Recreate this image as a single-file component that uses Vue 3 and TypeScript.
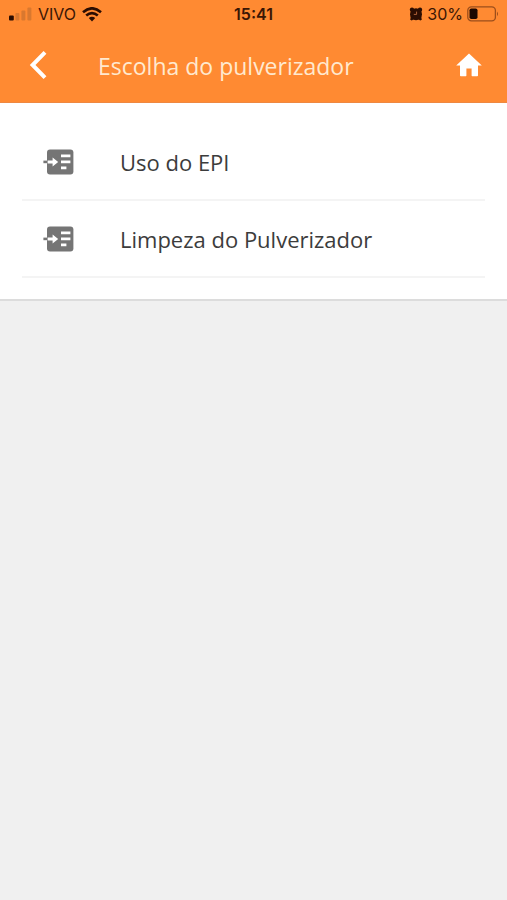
<script setup lang="ts">
interface MenuEntry {
  id: string
  label: string
}

const entries: MenuEntry[] = [
  { id: 'uso-epi', label: 'Uso do EPI' },
  { id: 'limpeza', label: 'Limpeza do Pulverizador' },
]

const carrier = 'VIVO'
const clock = '15:41'
const battery = 30
</script>

<template>
  <div class="screen">
    <header class="header">
      <div class="status">
        <div class="status-left">
          <svg class="signal" width="24" height="14" viewBox="0 0 24 14" aria-hidden="true">
            <rect x="1" y="8.6" width="4.8" height="5" rx="1" fill="#2b0d02" />
            <g fill="#d9782f">
              <rect x="7.4" y="6" width="4" height="7.6" rx="1" />
              <rect x="13.4" y="3.4" width="4" height="10.2" rx="1" />
              <rect x="19.4" y="0.4" width="4" height="13.2" rx="1" />
            </g>
          </svg>
          <span class="carrier">{{ carrier }}</span>
          <svg width="20" height="15" viewBox="0 0 20 15" aria-hidden="true">
            <g fill="none" stroke="#2b0d02" stroke-width="2.6">
              <path d="M1 5.2Q10 -2.6 19 5.2" />
              <path d="M4.2 8.6Q10 3.6 15.8 8.6" />
            </g>
            <path d="M6.8 11.1Q10 8.4 13.2 11.1L10 14.6Z" fill="#2b0d02" />
          </svg>
        </div>
        <time class="clock">{{ clock }}</time>
        <div class="status-right">
          <svg width="14" height="14" viewBox="0 0 14 14" aria-hidden="true">
            <g fill="#2b0d02">
              <circle cx="7" cy="7.2" r="6" />
              <circle cx="3" cy="2.8" r="2.2" />
              <circle cx="11" cy="2.8" r="2.2" />
              <path d="M2 9L1.2 12.8L2.8 13.6L5 12ZM12 9L12.8 12.8L11.2 13.6L9 12Z" />
            </g>
            <path d="M7.6 4.6V7.4H4.8" fill="none" stroke="#b0633a" stroke-width="1" />
          </svg>
          <span class="percent">{{ battery }}%</span>
          <svg width="32" height="16" viewBox="0 0 32 16" aria-hidden="true">
            <rect x="0.8" y="0.8" width="27.6" height="14" rx="3.6" fill="none" stroke="#9c4e1b" stroke-width="1.3" />
            <rect x="2.5" y="2.5" width="8" height="10.6" rx="1.8" fill="#1d0801" />
            <path d="M30 5.4Q32 7.8 30 10.2Z" fill="#9c4e1b" />
          </svg>
        </div>
      </div>
      <nav class="toolbar">
        <button class="icon-button" type="button" aria-label="Voltar">
          <svg width="18" height="30" viewBox="0 0 18 30" aria-hidden="true">
            <path d="M16 2.4L3.6 15L16 27.6" fill="none" stroke="#fff" stroke-width="4" />
          </svg>
        </button>
        <h1 class="title">Escolha do pulverizador</h1>
        <button class="icon-button" type="button" aria-label="Início">
          <svg width="26" height="24" viewBox="0 0 26 24" aria-hidden="true">
            <path d="M13 0.4L0.2 12.4H4V22.4Q4 23.2 4.8 23.2H9.8Q10.4 23.2 10.4 22.6V15.4H15.6V22.6Q15.6 23.2 16.2 23.2H21.2Q22 23.2 22 22.4V12.4H25.8Z" fill="#fff" />
          </svg>
        </button>
      </nav>
    </header>
    <main>
      <ul class="list">
        <li v-for="entry in entries" :key="entry.id" class="item">
          <a class="link" :href="'#' + entry.id">
            <svg class="glyph" width="31" height="26" viewBox="0 0 31 26" aria-hidden="true">
              <rect x="4" y="0.6" width="26.4" height="24.8" rx="3" fill="#757575" />
              <path d="M0.4 11.6H4V14.2H0.4Z" fill="#757575" />
              <path d="M4.6 11.4H9.6V8.4L15.2 12.9L9.6 17.4V14.4H4.6Z" fill="#fff" />
              <path d="M18 5.4H27.4V8.2H18ZM18 11.5H27.4V14.3H18ZM18 17.4H23.4V20.2H18Z" fill="#fff" />
            </svg>
            <span>{{ entry.label }}</span>
          </a>
        </li>
      </ul>
    </main>
  </div>
</template>

<style>
body {
  background: #f0f0f0;
}
</style>

<style scoped>
.screen {
  min-height: 100vh;
  background: #f0f0f0;
  font-family: "Open Sans", "Noto Sans", sans-serif;
}

.header {
  background: #ff8a32;
  border-bottom: 1px solid #ee8841;
}

.status {
  display: grid;
  grid-template-columns: 1fr auto 1fr;
  align-items: center;
  height: 28px;
  padding: 0 8px;
  color: #3a1605;
  font-family: Inter, "Liberation Sans", sans-serif;
  font-size: 16px;
  line-height: 20px;
}

.status-left,
.status-right {
  display: flex;
  align-items: center;
  gap: 6px;
}

.status-right {
  justify-content: flex-end;
  gap: 4px;
}

.clock {
  font-weight: 600;
}

.toolbar {
  display: flex;
  align-items: center;
  height: 74px;
  padding: 0 24px;
}

.icon-button {
  display: flex;
  align-items: center;
  justify-content: center;
  width: 28px;
  height: 44px;
  padding: 0;
  border: 0;
  background: none;
  cursor: pointer;
}

.title {
  flex: 1;
  margin: 0 0 0 46px;
  padding-top: 2px;
  color: #ffe9cf;
  font-size: 23px;
  font-weight: 400;
  line-height: 32px;
}

.list {
  margin: 0;
  padding: 20px 22px;
  border-bottom: 2px solid #dcdcdc;
  background: #fff;
  list-style: none;
}

.item {
  border-bottom: 2px solid #f4f4f4;
}

.link {
  display: flex;
  align-items: center;
  gap: 46px;
  box-sizing: border-box;
  height: 75px;
  padding-left: 21px;
  color: #3c3c3c;
  font-size: 22px;
  line-height: 30px;
  text-decoration: none;
}

.item:first-child {
  padding-top: 1px;
}

.item:last-child {
  margin-bottom: 1px;
}
</style>
